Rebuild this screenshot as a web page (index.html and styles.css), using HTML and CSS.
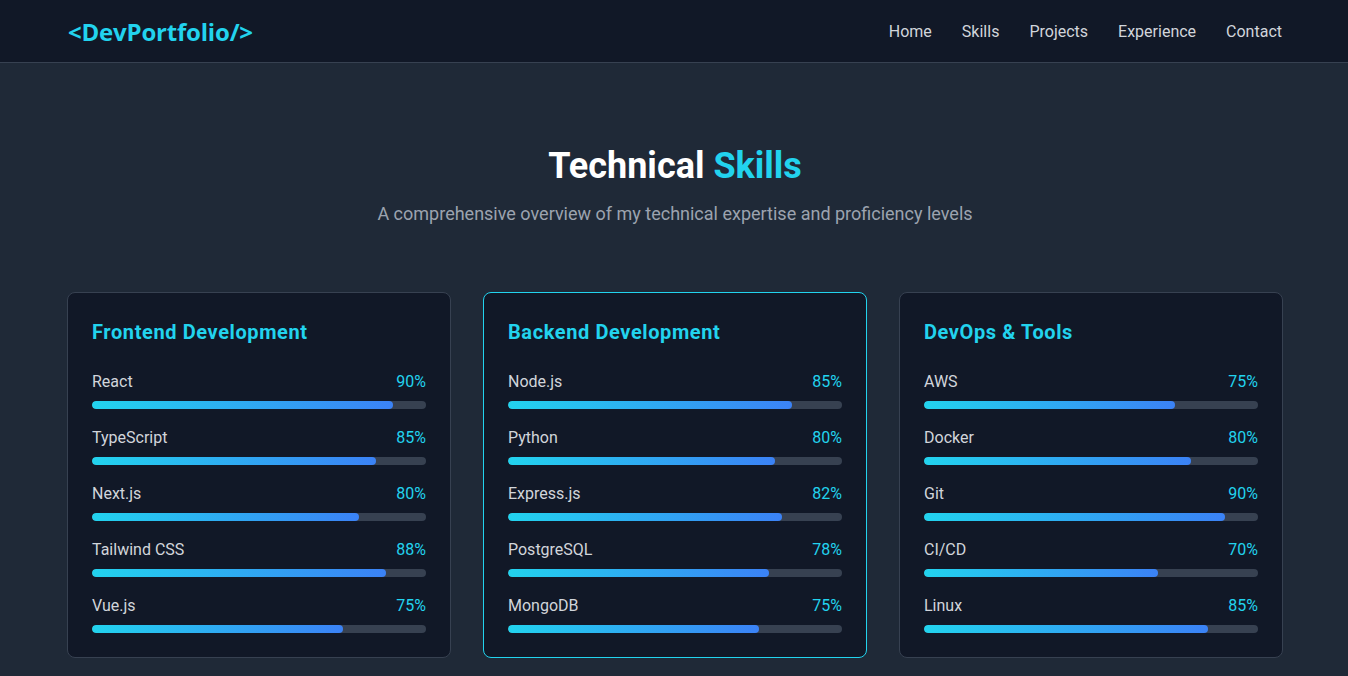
FILE: index.html
```html
<!DOCTYPE html>
<html lang="en">
<head>
<meta charset="utf-8">
<title>DevPortfolio</title>
<link rel="stylesheet" href="styles.css">
</head>
<body>
<header class="nav">
  <div class="nav-inner">
    <a class="logo" href="#">&lt;DevPortfolio/&gt;</a>
    <nav class="links">
      <a href="#">Home</a>
      <a href="#">Skills</a>
      <a href="#">Projects</a>
      <a href="#">Experience</a>
      <a href="#">Contact</a>
    </nav>
  </div>
</header>
<main class="section">
  <h1 class="title">Technical <span class="accent">Skills</span></h1>
  <p class="subtitle">A comprehensive overview of my technical expertise and proficiency levels</p>
  <div class="grid">
    <div class="card">
      <h2 class="card-title">Frontend Development</h2>
      <div class="skill"><div class="row"><span>React</span><span class="pct">90%</span></div><div class="track"><div class="fill" style="width:90%"></div></div></div>
      <div class="skill"><div class="row"><span>TypeScript</span><span class="pct">85%</span></div><div class="track"><div class="fill" style="width:85%"></div></div></div>
      <div class="skill"><div class="row"><span>Next.js</span><span class="pct">80%</span></div><div class="track"><div class="fill" style="width:80%"></div></div></div>
      <div class="skill"><div class="row"><span>Tailwind CSS</span><span class="pct">88%</span></div><div class="track"><div class="fill" style="width:88%"></div></div></div>
      <div class="skill"><div class="row"><span>Vue.js</span><span class="pct">75%</span></div><div class="track"><div class="fill" style="width:75%"></div></div></div>
    </div>
    <div class="card active">
      <h2 class="card-title">Backend Development</h2>
      <div class="skill"><div class="row"><span>Node.js</span><span class="pct">85%</span></div><div class="track"><div class="fill" style="width:85%"></div></div></div>
      <div class="skill"><div class="row"><span>Python</span><span class="pct">80%</span></div><div class="track"><div class="fill" style="width:80%"></div></div></div>
      <div class="skill"><div class="row"><span>Express.js</span><span class="pct">82%</span></div><div class="track"><div class="fill" style="width:82%"></div></div></div>
      <div class="skill"><div class="row"><span>PostgreSQL</span><span class="pct">78%</span></div><div class="track"><div class="fill" style="width:78%"></div></div></div>
      <div class="skill"><div class="row"><span>MongoDB</span><span class="pct">75%</span></div><div class="track"><div class="fill" style="width:75%"></div></div></div>
    </div>
    <div class="card">
      <h2 class="card-title">DevOps &amp; Tools</h2>
      <div class="skill"><div class="row"><span>AWS</span><span class="pct">75%</span></div><div class="track"><div class="fill" style="width:75%"></div></div></div>
      <div class="skill"><div class="row"><span>Docker</span><span class="pct">80%</span></div><div class="track"><div class="fill" style="width:80%"></div></div></div>
      <div class="skill"><div class="row"><span>Git</span><span class="pct">90%</span></div><div class="track"><div class="fill" style="width:90%"></div></div></div>
      <div class="skill"><div class="row"><span>CI/CD</span><span class="pct">70%</span></div><div class="track"><div class="fill" style="width:70%"></div></div></div>
      <div class="skill"><div class="row"><span>Linux</span><span class="pct">85%</span></div><div class="track"><div class="fill" style="width:85%"></div></div></div>
    </div>
  </div>
</main>
</body>
</html>
```
FILE: styles.css
```css
* { box-sizing: border-box; }
html, body { margin: 0; padding: 0; }
body {
  background: #1f2937;
  color: #d1d5db;
  font-family: Roboto, "Open Sans", sans-serif;
  font-size: 16px;
  line-height: 1.5;
}
a { text-decoration: none; color: inherit; }
.nav {
  background: #111827;
  border-bottom: 1px solid #374151;
}
.nav-inner {
  max-width: 1280px;
  margin: 0 auto;
  padding: 1px 32px 0 34px;
  height: 62px;
  display: flex;
  align-items: center;
  justify-content: space-between;
}
.logo {
  color: #22d3ee;
  font-family: "Open Sans", Roboto, sans-serif;
  font-weight: 700;
  font-size: 24px;
  line-height: 32px;
  letter-spacing: -0.2px;
}
.links { display: flex; gap: 30px; }
.links a { color: #d1d5db; font-size: 16px; }
.section {
  max-width: 1280px;
  margin: 0 auto;
  padding: 83px 31px 18px 33px;
}
.title {
  margin: 0 0 14px;
  text-align: center;
  font-size: 36px;
  line-height: 40px;
  font-weight: 700;
  color: #ffffff;
}
.accent { color: #22d3ee; }
.subtitle {
  margin: 0 0 64px;
  text-align: center;
  font-size: 18px;
  line-height: 28px;
  color: #9ca3af;
}
.grid {
  display: grid;
  grid-template-columns: repeat(3, 1fr);
  gap: 32px;
}
.card {
  background: #111827;
  border: 1px solid #374151;
  border-radius: 8px;
  padding: 24px;
}
.card.active { border-color: #22d3ee; }
.card-title {
  margin: 0 0 23px;
  padding-top: 1px;
  font-size: 20px;
  line-height: 28px;
  font-weight: 700;
  letter-spacing: 0.6px;
  color: #22d3ee;
}
.skill + .skill { margin-top: 16px; }
.row {
  display: flex;
  justify-content: space-between;
  padding-top: 1px;
  margin-bottom: 7px;
  color: #d1d5db;
}
.pct { color: #22d3ee; }
.track {
  height: 8px;
  background: #374151;
  border-radius: 9999px;
  overflow: hidden;
}
.fill {
  height: 100%;
  border-radius: 9999px;
  background: linear-gradient(to right, #22d3ee, #3b82f6);
}
```
